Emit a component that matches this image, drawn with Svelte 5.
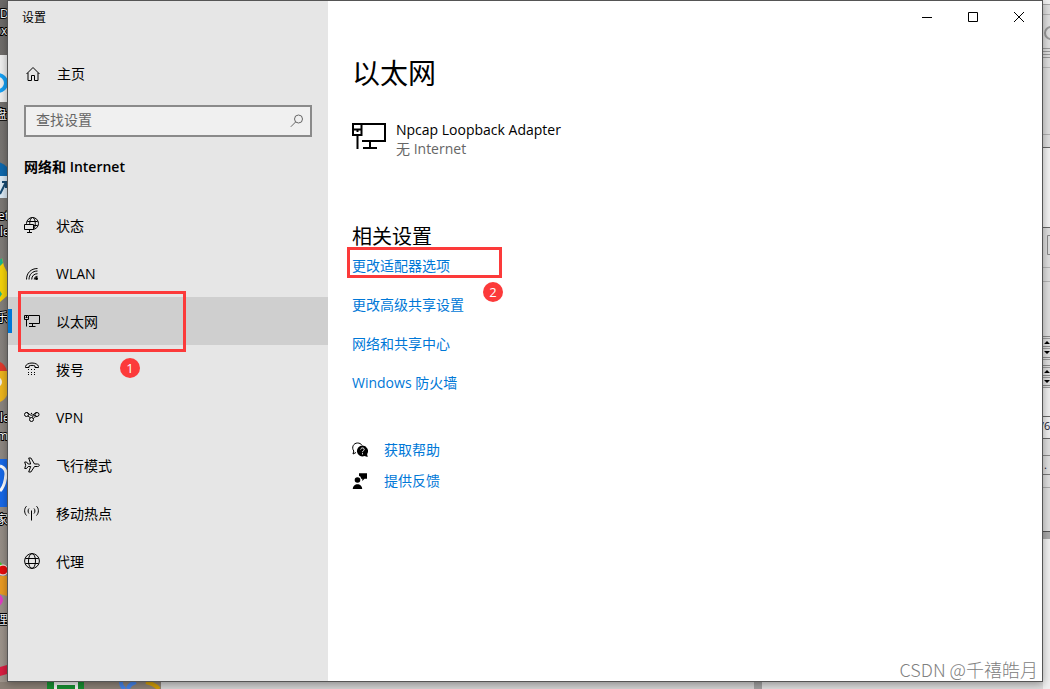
<script>
	const navItems = [
		{ id: 'status', label: '状态' },
		{ id: 'wlan', label: 'WLAN' },
		{ id: 'ethernet', label: '以太网' },
		{ id: 'dialup', label: '拨号' },
		{ id: 'vpn', label: 'VPN' },
		{ id: 'airplane', label: '飞行模式' },
		{ id: 'hotspot', label: '移动热点' },
		{ id: 'proxy', label: '代理' }
	];

	const related = ['更改适配器选项', '更改高级共享设置', '网络和共享中心', 'Windows 防火墙'];

	let current = $state('ethernet');
	let query = $state('');

	// [y, colour] of the horizontal rules in the window peeking out on the right
	const rules = [
		[4, '#a8a8a8'],
		[14, '#b4b4b4'],
		[48, '#999'],
		[51, '#999'],
		[54, '#999'],
		[57, '#999'],
		[67, '#b8b8b8'],
		[134, '#b0b0b0'],
		[147, '#666'],
		[227, '#666'],
		[267, '#b4b4b4'],
		[281, '#b4b4b4'],
		[336, '#888'],
		[338, '#999'],
		[346, '#888'],
		[348, '#999'],
		[357, '#888'],
		[359, '#999'],
		[365, '#888'],
		[367, '#999'],
		[375, '#888'],
		[377, '#999'],
		[385, '#888'],
		[387, '#999'],
		[416, '#666'],
		[438, '#666'],
		[455, '#888'],
		[474, '#777'],
		[487, '#aaa'],
		[531, '#555']
	];
</script>

{#snippet icon(id)}
	<svg class="icon" viewBox="0 0 16 16" aria-hidden="true">
		{#if id === 'home'}
			<path d="M1.5 8 8 1.500 14.500 8M3 6.800v7.700h3.500V9.500h3v5H13V6.800" />
		{:else if id === 'status'}
			<circle cx="8.500" cy="6.500" r="6" />
			<ellipse cx="8.500" cy="6.500" rx="2.800" ry="6" />
			<path d="M3.300 4.500h10.400M3.300 8.500h10.400" />
			<path class="cover" d="M.5 7.500h9v5h-9z" />
			<path d="M5.500 12.500v3M3 15.500h5" />
		{:else if id === 'wlan'}
			<path d="M2.500 14.500C2.500 8 7 3.500 13.500 3.500M5 14.500c0-5 3.500-8.500 8.500-8.500M7.700 14.500c0-3.500 2.300-5.800 5.800-5.800M10.300 14.500c0-2 1.200-3.200 3.200-3.200" />
			<circle class="solid" cx="12.500" cy="13.500" r="1.500" />
		{:else if id === 'ethernet'}
			<path d="M5 2.500h10.500v8H5M8.500 10.500v3M5 13.500h6.500M.5 2.500h4v4h-4zM2.500 6.500v7M1.500 4.500h2M2.500 2.500v2" />
		{:else if id === 'dialup'}
			<path d="M1.500 6.500v-1C2 3.300 4.800 2 8 2s6 1.300 6.500 3.500v1h-3.500V5C9.500 4.200 6.500 4.200 5 5v1.500z" />
			<path class="dots" d="M4 8.500h8M4 11.500h8M4 13.500h8" />
		{:else if id === 'vpn'}
			<circle cx="2.500" cy="5.500" r="2" />
			<circle cx="13" cy="5.500" r="2" />
			<circle cx="7.500" cy="10.500" r="2" />
			<path d="M2.500 3.500c2.300 0 2.700 2.800 5 2.800s3-2.800 5.500-2.800M4 7.200C6 7.800 5.500 8 6 9M9.300 9.700c.7-1.500 1.700-2.200 3.700-2.200M8 8.500c.5-1.200 1.500-2 3-2.400" />
			<circle class="solid" cx="7.500" cy="4.500" r=".700" />
		{:else if id === 'airplane'}
			<path d="M.7 5h1.800l1.700 2h2.500L4.700 1h2.200L10.500 7h3c2.400 0 2.400 2.500 0 2.500h-3l-3.600 5.500H4.700l2-5.500H4.200l-1.700 2H.7l1-3.200z" />
		{:else if id === 'hotspot'}
			<path d="M7.500 5.500v10M5 8.500c-1.200-1.200-1.200-3.800 0-5M10 8.500c1.200-1.200 1.200-3.800 0-5M2.500 10.500C0 8 0 3.500 2.500 1.200M12.500 10.500c2.500-2.500 2.500-7 0-9.300" />
		{:else if id === 'proxy'}
			<circle cx="8" cy="8" r="7.400" />
			<ellipse cx="8" cy="8" rx="3.500" ry="7.400" />
			<path d="M1.300 5.500h13.400M1.300 10.500h13.400" />
		{:else if id === 'help'}
			<path d="M4 10.500 1 12l.8-3C-.8 5.500 1.500 1 5.500 1 7.500 1 9 1.800 10 3.300" />
			<path class="solid" d="M10.500 3.500a5.500 5.500 0 0 1 4.600 8.500l.6 3-3.200-.9a5.500 5.500 0 1 1-2-10.600z" />
			<path class="cut" d="M8.700 7.500c.2-2.200 3.700-1.900 3.500 0-.1 1.300-1.700 1.200-1.700 2.700M10.500 11.200v1.200" />
		{:else if id === 'feedback'}
			<circle class="solid" cx="5.500" cy="7" r="2.800" />
			<path class="solid" d="M.8 16c0-6.500 9.400-6.500 9.400 0zM7 .3h8v5.500h-2.500L10.300 8V5.800H9C9 4 8.300 3.300 7 3z" />
		{/if}
	</svg>
{/snippet}

<div class="desktop">
	<svg class="strip strip--left" viewBox="0 0 7 689" preserveAspectRatio="xMinYMin slice" aria-hidden="true">
		<defs>
			<linearGradient id="wall" x1="0" y1="0" x2="0" y2="1">
				<stop offset="0" stop-color="#6c6a68" />
				<stop offset="0.45" stop-color="#84807c" />
				<stop offset="1" stop-color="#a0968d" />
			</linearGradient>
		</defs>
		<rect width="7" height="689" fill="url(#wall)" />
		<rect y="55" width="7" height="47" fill="#efefef" />
		<circle cx="-2" cy="83" r="8" fill="none" stroke="#16a0f4" stroke-width="4" />
		<circle cx="-7" cy="180" r="19" fill="#0d68ad" />
		<path d="M0 176h7v22H0z" fill="#dceaf5" />
		<path d="m0 194 6-12M2 182h4v6" fill="none" stroke="#174b73" stroke-width="2" />
		<path d="M0 262 2 258l2 8 3 6v24l-7 6z" fill="#f4d20a" />
		<path d="M0 260l2-2 1 5-3 3zM0 291l2 3-2 3z" fill="#18b58a" />
		<path d="M0 362q5 2 7 9H0z" fill="#df3a2e" />
		<path d="M0 371h7v24q-2 5-7 7z" fill="#edb51e" />
		<circle cx="-3" cy="382" r="5" fill="#f1eee8" />
		<rect y="459" width="7" height="48" fill="#1769e8" />
		<path d="M0 466q6 2 6 8-1 12-6 17" fill="none" stroke="#fff" stroke-width="3" />
		<path d="M0 562l5 5H0z" fill="#42c32d" />
		<path d="M0 576h7v20l-7-2z" fill="#e99a22" />
		<circle cx="3" cy="570" r="5" fill="#e60b0b" stroke="#fff" />
		<circle cx="-3" cy="600" r="6" fill="#e23cc4" />
		<path d="M0 667l7-2v9l-7 2z" fill="#d91f42" />
		<g class="caption">
			<text x="0" y="18">D</text>
			<text x="1" y="35">x</text>
			<text x="-5" y="119">盘</text>
			<text x="-2" y="220">et</text>
			<text x="0" y="236">le</text>
			<text x="-4" y="322">乐</text>
			<text x="0" y="422">le</text>
			<text x="-3" y="440">m</text>
			<text x="-4" y="524">家</text>
			<text x="-4" y="624">理</text>
		</g>
	</svg>

	<div class="window">
		<aside class="sidebar">
			<div class="caption-bar">设置</div>
			<a class="home" href="#home">{@render icon('home')}主页</a>
			<div class="search">
				<input type="text" aria-label="查找设置" placeholder="查找设置" bind:value={query} />
				<svg class="search__icon" viewBox="0 0 14 14" aria-hidden="true">
					<circle cx="8.500" cy="5" r="4" />
					<path d="M5.700 7.900.8 12.800" />
				</svg>
			</div>
			<h2 class="section">网络和 Internet</h2>
			<nav>
				{#each navItems as item (item.id)}
					<a
						class="nav-item"
						class:nav-item--current={item.id === current}
						href="#{item.id}"
						onclick={() => (current = item.id)}
					>
						{@render icon(item.id)}<span class="label">{item.label}</span>
					</a>
				{/each}
			</nav>
		</aside>

		<main class="main">
			<div class="controls">
				<button type="button" aria-label="最小化">
					<svg viewBox="0 0 10 10"><path d="M0 5.500h10" /></svg>
				</button>
				<button type="button" aria-label="最大化">
					<svg viewBox="0 0 10 10"><path d="M.5.5h9v9h-9z" /></svg>
				</button>
				<button type="button" aria-label="关闭">
					<svg viewBox="0 0 10 10"><path d="m0 0 10 10M10 0 0 10" /></svg>
				</button>
			</div>

			<div class="content">
				<h1>以太网</h1>
				<div class="adapter">
					<svg class="adapter__icon" viewBox="0 0 34 28" aria-hidden="true">
						<path d="M10 1h23v17H10M18 18v7M11 25h14M1 1h8.500v11H1zM1 6.500h9M5.500 12v14M5.500 6v3" />
					</svg>
					<div>
						<div class="adapter__name">Npcap Loopback Adapter</div>
						<div class="adapter__state">无 Internet</div>
					</div>
				</div>

				<h2>相关设置</h2>
				<ul class="links">
					{#each related as label (label)}
						<li><a href="#related">{label}</a></li>
					{/each}
				</ul>

				<ul class="support">
					<li>{@render icon('help')}<a href="#help">获取帮助</a></li>
					<li>{@render icon('feedback')}<a href="#feedback">提供反馈</a></li>
				</ul>
			</div>
		</main>

		<!-- step markers drawn over the window -->
		<span class="frame frame--1"></span>
		<span class="step step--1">1</span>
		<span class="frame frame--2"></span>
		<span class="step step--2">2</span>
		<span class="watermark">CSDN @千禧皓月</span>
	</div>

	<svg class="strip strip--right" viewBox="0 0 7 689" preserveAspectRatio="xMinYMin slice" aria-hidden="true">
		<rect width="7" height="689" fill="#f0f0f0" />
		<rect y="4" width="7" height="527" fill="#dedede" />
		<rect y="147" width="7" height="80" fill="#f2f2f2" />
		<rect y="388" width="7" height="50" fill="#eee" />
		<rect y="531" width="7" height="8" fill="#aaa" />
		{#each rules as [y, colour] (y)}
			<rect {y} width="7" height="1" fill={colour} />
		{/each}
		<circle cx="8" cy="33" r="6" fill="none" stroke="#999" stroke-width="2" />
		<path d="M8 235.500H4.500v19H8" fill="none" stroke="#888" />
		<path d="m1 344 3-3 3 3zM1 351h6l-3 3zM1 373l3-3 3 3zM1 380h6l-3 3z" />
		<text class="peek" x="-3" y="430">/6</text>
		<text class="peek" x="1" y="469">.</text>
	</svg>

	<div class="under">
		<svg viewBox="0 0 161 7" aria-hidden="true">
			<rect width="161" height="7" fill="#8b8076" />
			<path d="M47 0h37v7H47z" fill="#178d31" />
			<path d="M54 0h24v7h-3V3H57v4h-3z" fill="#eee" />
			<path d="M121 0q0 5 4 7M136 0q-7 2-8 7" fill="none" stroke="#4481e5" stroke-width="4" />
			<path d="M146 0q9 2 13 7" fill="none" stroke="#cf9b08" stroke-width="4" />
		</svg>
		<span class="under__panel"></span>
		<span class="under__split"></span>
		<span class="under__side"></span>
	</div>
</div>

<style>
	:global(body) {
		margin: 0;
		font-family: 'Open Sans', 'Noto Sans CJK SC', sans-serif;
		font-size: 14px;
		line-height: 20px;
		color: #000;
	}

	.desktop {
		display: grid;
		grid-template-columns: 7px 1fr 7px;
		grid-template-rows: 1fr 7px;
		min-height: 100vh;
		overflow: hidden;
	}

	/* ---- Whatever shows around the window ---- */
	.strip {
		grid-row: 1 / 3;
		width: 7px;
		height: 100%;
	}

	.strip--left {
		grid-column: 1;
	}

	.strip--right {
		grid-column: 3;
	}

	.caption {
		font-size: 12px;
		fill: #fff;
		stroke: #000;
		stroke-width: 2px;
		paint-order: stroke;
	}

	.peek {
		font-size: 11px;
		fill: #223;
	}

	.under {
		grid-column: 2;
		grid-row: 2;
		display: flex;
		margin-left: -7px;
	}

	.under svg {
		width: 161px;
		height: 7px;
	}

	.under__panel {
		flex: 593;
		background: #d2d2d2;
	}

	.under__split {
		flex: 0 0 8px;
		background: #a0a0a0;
	}

	.under__side {
		flex: 281;
		background: #dcdcdc;
	}

	/* ---- Window ---- */
	.window {
		grid-column: 2;
		grid-row: 1;
		position: relative;
		z-index: 1;
		display: flex;
		border: 1px solid #555;
		background: #fff;
		box-shadow: 0 2px 8px rgba(0, 0, 0, 0.35);
	}

	.sidebar {
		flex: 0 0 320px;
		background: #e6e6e6;
	}

	.caption-bar {
		padding-left: 14px;
		font-size: 12px;
		line-height: 34px;
	}

	a {
		color: #0078d7;
		text-decoration: none;
	}

	.icon {
		flex: none;
		width: 16px;
		height: 16px;
		fill: none;
		stroke: #000;
	}

	.icon .solid {
		fill: #000;
		stroke: none;
	}

	.icon .cover {
		fill: #e6e6e6;
	}

	.icon .cut {
		stroke: #fff;
	}

	.icon .dots {
		stroke-dasharray: 1 2;
	}

	.home {
		display: flex;
		align-items: center;
		gap: 16px;
		height: 48px;
		margin-top: 15px;
		padding-left: 17px;
		color: #000;
	}

	.search {
		display: flex;
		align-items: center;
		box-sizing: border-box;
		height: 32px;
		margin: 7px 16px 0;
		padding: 0 6px 0 10px;
		border: 2px solid #8a8a8a;
		background: #f0f0f0;
	}

	.search input {
		flex: 1;
		min-width: 0;
		padding: 0 0 2px;
		border: 0;
		outline: 0;
		background: none;
		font: inherit;
	}

	.search input::placeholder {
		color: #666;
		opacity: 1;
	}

	.search__icon {
		width: 14px;
		height: 14px;
		fill: none;
		stroke: #666;
	}

	.section {
		margin: 20px 16px 24px;
		font-size: 14px;
		font-weight: 600;
		line-height: 20px;
	}

	.nav-item {
		position: relative;
		display: flex;
		align-items: center;
		gap: 16px;
		height: 48px;
		padding-left: 16px;
		color: #000;
	}

	.label {
		padding-top: 2px;
	}

	.nav-item--current {
		background: #cfcfcf;
	}

	.nav-item--current::before {
		content: '';
		position: absolute;
		left: 0;
		width: 4px;
		height: 24px;
		background: #0078d7;
	}

	.main {
		flex: 1;
		min-width: 0;
	}

	.controls {
		display: flex;
		justify-content: flex-end;
	}

	.controls button {
		display: grid;
		place-items: center;
		width: 46px;
		height: 32px;
		padding: 0;
		border: 0;
		background: none;
	}

	.controls svg {
		width: 10px;
		height: 10px;
		fill: none;
		stroke: #000;
	}

	.content {
		padding: 22px 24px;
	}

	h1,
	.content h2 {
		margin: 0;
		font-weight: 400;
	}

	h1 {
		font-size: 28px;
		line-height: 36px;
	}

	.adapter {
		display: flex;
		gap: 10px;
		margin-top: 29px;
		line-height: 19px;
	}

	.adapter__icon {
		width: 34px;
		height: 28px;
		margin-top: 3px;
		fill: none;
		stroke: #000;
		stroke-width: 2;
	}

	.adapter__state {
		color: #666;
	}

	.content h2 {
		margin-top: 65px;
		font-size: 20px;
		line-height: 28px;
	}

	ul {
		display: flex;
		flex-direction: column;
		margin: 0;
		padding: 0;
		list-style: none;
	}

	.links {
		gap: 19px;
		margin-top: 5px;
	}

	.support {
		gap: 11px;
		margin-top: 47px;
	}

	.support li {
		display: flex;
		align-items: center;
		gap: 16px;
	}

	/* ---- Step markers ---- */
	.frame {
		position: absolute;
		box-sizing: border-box;
		border: 3px solid #fc3a3a;
		pointer-events: none;
	}

	.frame--1 {
		left: 10px;
		top: 290px;
		width: 168px;
		height: 61px;
	}

	.frame--2 {
		left: 339px;
		top: 246px;
		width: 155px;
		height: 31px;
	}

	.step {
		position: absolute;
		width: 20px;
		height: 20px;
		border-radius: 50%;
		background: #fc3a3a;
		color: #fff;
		font-size: 13px;
		text-align: center;
	}

	.step--1 {
		left: 112px;
		top: 357px;
	}

	.step--2 {
		left: 475px;
		top: 281px;
	}

	.watermark {
		position: absolute;
		right: 4px;
		bottom: 2px;
		color: #808080;
		font-family: 'Noto Sans CJK SC', sans-serif;
		font-size: 18px;
		font-weight: 300;
	}
</style>
